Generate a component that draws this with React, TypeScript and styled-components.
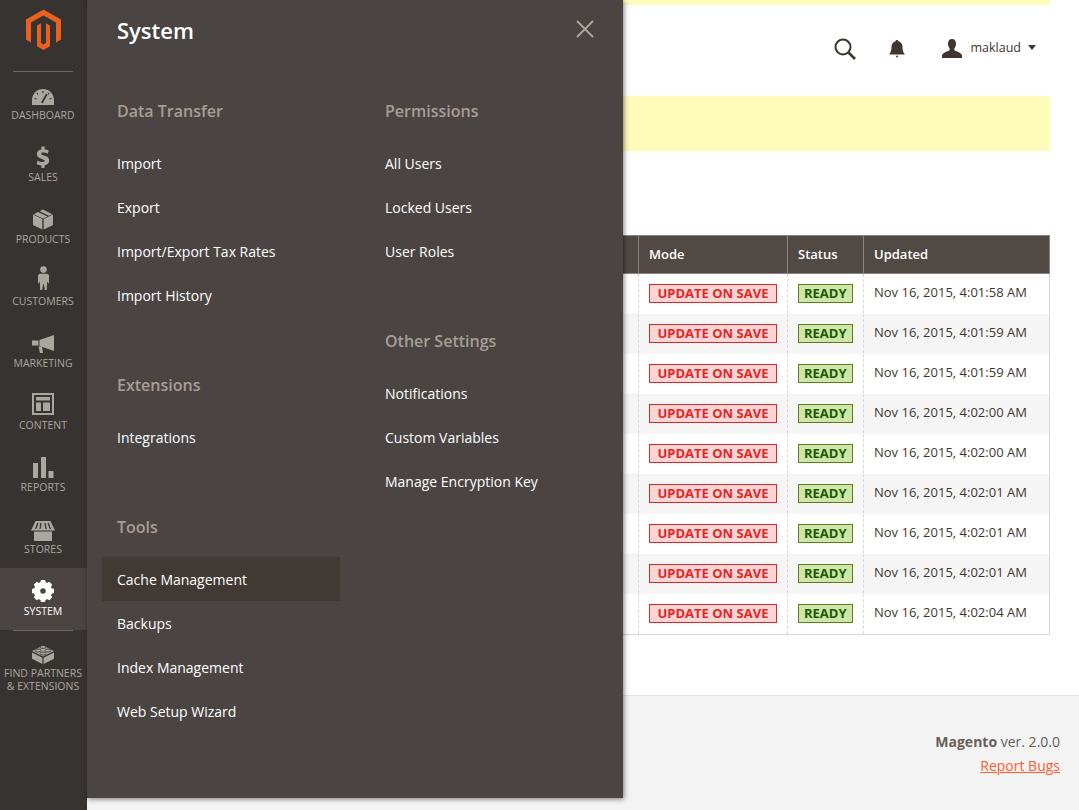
import React from 'react';
import styled, { createGlobalStyle } from 'styled-components';

const Global = createGlobalStyle`
  html, body { margin: 0; padding: 0; height: 100%; overflow: hidden; background: #fff; }
  * { box-sizing: border-box; }
  body { font-family: "Open Sans", "Liberation Sans", sans-serif; color: #41362f; }
`;

const Page = styled.div`
  position: relative;
  display: flex;
  width: 1079px;
  height: 810px;
  overflow: hidden;
`;

const Sidebar = styled.nav`
  flex: 0 0 87px;
  background: #373330;
  display: flex;
  flex-direction: column;
`;

const LogoBlock = styled.div`
  height: 72px;
  padding-top: 9px;
  display: flex;
  justify-content: center;
  align-items: flex-start;
  position: relative;
  &::after {
    content: '';
    position: absolute;
    left: 13px;
    right: 14px;
    bottom: 0;
    height: 1px;
    background: #736963;
  }
`;

const NavItem = styled.a<{ $active?: boolean }>`
  height: 62px;
  padding: 8px 1px 0 0;
  display: flex;
  flex-direction: column;
  align-items: center;
  background: ${p => (p.$active ? '#4a4542' : 'transparent')};
  color: ${p => (p.$active ? '#ffffff' : '#aaa6a0')};
  font-size: 10.5px;
  line-height: 13px;
  text-align: center;
  text-transform: uppercase;
  white-space: pre-line;
`;

const NavDivider = styled.div`
  height: 1px;
  margin: 0 14px 0 13px;
  background: #736963;
  margin-bottom: -1px;
  position: relative;
`;

const NavIcon = styled.svg`
  display: block;
  width: 28px;
  height: 28px;
  margin-bottom: 1px;
  flex: none;
  fill: currentColor;
`;

const Main = styled.div`
  flex: 1;
  display: flex;
  flex-direction: column;
  min-width: 0;
`;

const Content = styled.div`
  flex: 1;
  padding: 0 29px 0 30px;
`;

const Notice = styled.div<{ $h: number }>`
  height: ${p => p.$h}px;
  background: #fffbbb;
`;

const Header = styled.header`
  height: 91px;
  display: flex;
  align-items: center;
  justify-content: flex-end;
  padding-bottom: 4px;
  padding-right: 14px;
`;

const IconButton = styled.button<{ $right: number }>`
  border: 0;
  background: none;
  padding: 0;
  margin-right: ${p => p.$right}px;
  display: flex;
  color: #41362f;
`;

const UserName = styled.span`
  font-size: 12.5px;
  color: #41362f;
  margin-left: 8px;
  position: relative;
  top: -1px;
`;

const Caret = styled.span`
  width: 0;
  height: 0;
  margin-left: 7px;
  border-left: 4px solid transparent;
  border-right: 4px solid transparent;
  border-top: 5px solid #41362f;
  position: relative;
  top: -1px;
`;

const Grid = styled.table`
  width: 932px;
  margin-top: 84px;
  border-collapse: collapse;
  table-layout: fixed;
  font-size: 13px;
`;

const HeadCell = styled.th<{ $w: number }>`
  width: ${p => p.$w}px;
  height: 38px;
  padding: 0 10px 2px;
  background: #514943;
  border: 1px solid #8a837f;
  color: #fff;
  font-size: 13px;
  font-weight: 600;
  text-align: left;
`;

const Row = styled.tr<{ $odd: boolean }>`
  height: 40px;
  background: ${p => (p.$odd ? '#f5f5f5' : '#fff')};
  &:last-child { height: 41px; }
`;

const Cell = styled.td`
  padding: 0 10px 2px;
  border-left: 1px dashed #d6d6d6;
  border-right: 1px dashed #d6d6d6;
  border-bottom: 1px solid transparent;
  color: #41362f;
  white-space: nowrap;
  tr:last-child & { border-bottom: 1px solid #d6d6d6; }
  &:first-child { border-left: 1px solid #d6d6d6; }
  &:last-child { border-right: 1px solid #d6d6d6; padding-bottom: 4px; }
`;

const Badge = styled.span<{ $tone: 'red' | 'green' }>`
  display: inline-block;
  height: 19px;
  padding: 0 ${p => (p.$tone === 'red' ? 7.5 : 5)}px;
  line-height: 17px;
  font-size: 13px;
  font-weight: 700;
  text-transform: uppercase;
  vertical-align: middle;
  border: 1px solid ${p => (p.$tone === 'red' ? '#e22626' : '#5b8116')};
  background: ${p => (p.$tone === 'red' ? '#fad5d5' : '#d0e5a9')};
  color: ${p => (p.$tone === 'red' ? '#e22626' : '#185b00')};
`;

const Footer = styled.footer`
  height: 115px;
  flex: none;
  background: #f3f3f3;
  border-top: 1px solid #e3e3e3;
  padding: 34px 19px 0 0;
  text-align: right;
  font-size: 14px;
  line-height: 24px;
  color: #676056;
`;

const ReportLink = styled.a`
  color: #ff5d2e;
  text-decoration: underline;
`;

const Panel = styled.aside`
  position: absolute;
  left: 87px;
  top: 0;
  width: 536px;
  height: 798px;
  padding: 0 15px;
  background: #4a4542;
  box-shadow: 1px 1px 5px rgba(0, 0, 0, 0.5);
  color: #fff;
`;

const PanelTitle = styled.h2`
  margin: 0;
  height: 100px;
  padding: 15px 0 0 15px;
  font-size: 22px;
  line-height: 30px;
  font-weight: 600;
`;

const CloseIcon = styled.svg`
  position: absolute;
  right: 29px;
  top: 20px;
  width: 18px;
  height: 18px;
  stroke: #aaa6a0;
  stroke-width: 1.8;
`;

const Columns = styled.div`
  display: grid;
  grid-template-columns: 238px 238px;
  column-gap: 30px;
`;

const Section = styled.section`
  margin-bottom: 57px;
`;

const SectionTitle = styled.h3`
  margin: 0 0 19px;
  height: 22px;
  padding-left: 15px;
  font-size: 16px;
  line-height: 22px;
  font-weight: 600;
  color: #a79d95;
`;

const MenuItem = styled.a<{ $active?: boolean }>`
  display: block;
  height: 44px;
  padding-left: 15px;
  line-height: 46px;
  font-size: 14px;
  color: #fff;
  background: ${p => (p.$active ? '#403934' : 'transparent')};
  white-space: nowrap;
`;

const icons: Record<string, React.ReactNode> = {
  dashboard: (
    <>
      <path d="M3 25v-5a11 11 0 0 1 22 0v5z" />
      <g stroke="#373330" strokeWidth="1.2">
        <path d="M14 11v2M8 13l1 1.5M20 13l-1 1.5M5.500 18.500l2 .5M22.500 18.500l-2 .5" />
        <path d="M12.800 23l5-9" strokeWidth="1.800" />
      </g>
    </>
  ),
  sales: (
    <path
      fillRule="evenodd"
      d="M12.400 4.500h3.200v2.800c1.700.2 3.100.6 4.200 1.200l-1.100 3.300c-1.400-.7-3-1.200-4.500-1.200-1.300 0-2 .4-2 1.100 0 .8 1 1.200 3 1.900 3.100 1 5 2.300 5 5 0 2.500-1.800 4.300-4.600 4.700v2.700h-3.200v-2.600c-1.900-.1-3.700-.6-4.900-1.300l1.100-3.400c1.400.8 3.200 1.400 4.900 1.400 1.400 0 2.200-.5 2.200-1.300 0-.8-.9-1.300-2.800-1.900-2.900-.9-5.100-2.100-5.100-4.900 0-2.500 1.800-4.100 4.600-4.600z"
    />
  ),
  products: (
    <>
      <path d="M4 10.500 13.300 15v10.500L4 21z" />
      <path d="M24 10.500 14.700 15v10.500L24 21z" />
      <path d="M9 8l9.500 4.500-4.500 2-9.300-4.300zM10.600 7.200 14 5.500l9.300 4.700-3.400 1.600z" />
    </>
  ),
  customers: (
    <>
      <circle cx="14.500" cy="3.600" r="3.300" />
      <path d="M11.200 7.800h6.600c1.300 0 2.200 1 2.200 2.200v8l-1.800-2.500-.4 8.500h-2l-1-6-.6 0-1 6h-2l-.4-8.500L9 18v-8c0-1.200 1-2.200 2.200-2.200z" />
    </>
  ),
  marketing: (
    <>
      <path d="M10.500 12 25 7v16l-14.500-5z" />
      <path d="M3 12.500h6.500v5H3z" />
      <path d="M9.500 18.500h3.500l1 6.500h-3z" />
    </>
  ),
  content: (
    <path
      fillRule="evenodd"
      d="M3 3h22v22H3zM5 5v18h18V5zM7 7h14v3.500H7zM7 12.500h5V21H7zM14 12.500h7V21h-7z"
    />
  ),
  reports: (
    <>
      <rect x="4" y="11" width="5" height="15" />
      <rect x="12" y="5" width="5" height="21" />
      <rect x="19.500" y="19" width="5" height="7" />
    </>
  ),
  stores: (
    <>
      <path d="M6.500 7h15l4.500 9.500H2z" />
      <g stroke="#373330" strokeWidth="1.300">
        <path d="M9 9 6.500 15M12 9l-1 6M16 9l1 6M19 9l2.500 6" />
      </g>
      <path d="M5 17.500h18V27H5z" />
    </>
  ),
  system: (
    <>
      <circle cx="14" cy="15" r="6" fill="none" stroke="currentColor" strokeWidth="6.400" />
      {[0, 45, 90, 135, 180, 225, 270, 315].map(a => (
        <path key={a} d="M11 7.500 12 4h4l1 3.500z" transform={`rotate(${a} 14 15)`} />
      ))}
    </>
  ),
  partners: (
    <>
      <path d="M14 7.500 25 13l-11 5.500L3 13z" />
      <path d="M3 14.500l10.400 5.200V26L3 20.800z" />
      <path d="M25 14.500l-10.400 5.200V26L25 20.800z" />
      <g stroke="#373330" strokeWidth=".8">
        <ellipse cx="14" cy="9" rx="3" ry="1.500" />
        <ellipse cx="9" cy="12.500" rx="3" ry="1.500" />
        <ellipse cx="19" cy="12.500" rx="3" ry="1.500" />
        <ellipse cx="14" cy="15.500" rx="3" ry="1.500" />
      </g>
    </>
  ),
};

const navItems = [
  ['dashboard', 'Dashboard'],
  ['sales', 'Sales'],
  ['products', 'Products'],
  ['customers', 'Customers'],
  ['marketing', 'Marketing'],
  ['content', 'Content'],
  ['reports', 'Reports'],
  ['stores', 'Stores'],
  ['system', 'System'],
];

const menuColumns = [
  [
    { title: 'Data Transfer', items: ['Import', 'Export', 'Import/Export Tax Rates', 'Import History'] },
    { title: 'Extensions', items: ['Integrations'] },
    { title: 'Tools', items: ['Cache Management', 'Backups', 'Index Management', 'Web Setup Wizard'] },
  ],
  [
    { title: 'Permissions', items: ['All Users', 'Locked Users', 'User Roles'] },
    { title: 'Other Settings', items: ['Notifications', 'Custom Variables', 'Manage Encryption Key'] },
  ],
];

const updated = [
  '4:01:58', '4:01:59', '4:01:59', '4:02:00', '4:02:00', '4:02:01', '4:02:01', '4:02:01', '4:02:04',
];

export default function App() {
  return (
    <Page>
      <Global />
      <Sidebar>
        <LogoBlock>
          <svg width="36" height="42" viewBox="26 9 36 42" fill="#eb5f1f">
            <path d="M26 19.500 43.500 9.500 61 19.500v20l-5 2.900V22.500l-12.500-7-12.500 7v19.900l-5-2.900z" />
            <path d="M37 25.500l4-2.300V43l2.500 1.500L46 43V23.200l4 2.300v20.700l-6.500 3.800-6.500-3.800z" />
          </svg>
        </LogoBlock>
        {navItems.map(([key, label]) => (
          <NavItem key={key} $active={key === 'system'}>
            <NavIcon viewBox="0 0 28 28">{icons[key]}</NavIcon>
            {label}
          </NavItem>
        ))}
        <NavDivider />
        <NavItem>
          <NavIcon viewBox="0 0 28 28">{icons.partners}</NavIcon>
          {'Find Partners\n& Extensions'}
        </NavItem>
      </Sidebar>

      <Main>
        <Content>
          <Notice $h={5} />
          <Header>
            <IconButton $right={32}>
              <svg width="24" height="24" viewBox="0 0 24 24" fill="none" stroke="currentColor">
                <circle cx="10" cy="10" r="7.500" strokeWidth="2" />
                <path d="M15.500 15.500 22 22" strokeWidth="2.600" />
              </svg>
            </IconButton>
            <IconButton $right={37}>
              <svg width="16" height="18" viewBox="0 0 16 18" fill="currentColor">
                <path d="M8 0c.8 0 1.300.5 1.400 1.200C12 2 13.500 4 13.500 7c0 3.500.7 5.500 2.500 7.500H0C1.800 12.500 2.500 10.500 2.500 7c0-3 1.500-5 4.100-5.800C6.700.5 7.200 0 8 0z" />
                <path d="M6.500 15.800h3L8 17.800z" />
              </svg>
            </IconButton>
            <IconButton $right={0}>
              <svg width="20" height="19" viewBox="0 0 20 19" fill="currentColor">
                <path d="M10 0c2.600 0 4 2 4 4.500 0 2-.7 3.800-1.700 5v1.800c2.800 1 6.700 2.700 7.700 4.700v3H0v-3c1-2 4.900-3.700 7.700-4.700V9.500C6.700 8.300 6 6.500 6 4.500 6 2 7.400 0 10 0z" />
              </svg>
            </IconButton>
            <UserName>maklaud</UserName>
            <Caret />
          </Header>
          <Notice $h={55} />
          <Grid>
            <thead>
              <tr>
                <HeadCell $w={521} />
                <HeadCell $w={149}>Mode</HeadCell>
                <HeadCell $w={76}>Status</HeadCell>
                <HeadCell $w={186}>Updated</HeadCell>
              </tr>
            </thead>
            <tbody>
              {updated.map((time, i) => (
                <Row key={i} $odd={i % 2 === 1}>
                  <Cell />
                  <Cell><Badge $tone="red">Update on Save</Badge></Cell>
                  <Cell><Badge $tone="green">Ready</Badge></Cell>
                  <Cell>Nov 16, 2015, {time} AM</Cell>
                </Row>
              ))}
            </tbody>
          </Grid>
        </Content>
        <Footer>
          <div><strong>Magento</strong> ver. 2.0.0</div>
          <ReportLink>Report Bugs</ReportLink>
        </Footer>
      </Main>

      <Panel>
        <PanelTitle>System</PanelTitle>
        <CloseIcon viewBox="0 0 18 18">
          <path d="M1 1l16 16M17 1 1 17" />
        </CloseIcon>
        <Columns>
          {menuColumns.map((sections, c) => (
            <div key={c}>
              {sections.map(section => (
                <Section key={section.title}>
                  <SectionTitle>{section.title}</SectionTitle>
                  {section.items.map(item => (
                    <MenuItem key={item} $active={item === 'Cache Management'}>{item}</MenuItem>
                  ))}
                </Section>
              ))}
            </div>
          ))}
        </Columns>
      </Panel>
    </Page>
  );
}
